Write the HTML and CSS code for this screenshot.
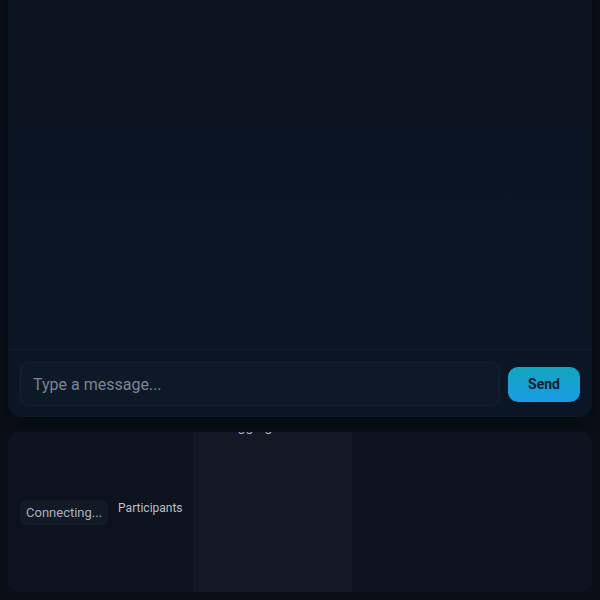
FILE: index.html
```html
<!DOCTYPE html>
<html lang="en">
<head>
<meta charset="utf-8">
<title>Chat</title>
<link rel="stylesheet" href="styles.css">
</head>
<body>
<main class="page">
  <section class="chat">
    <div class="messages"></div>
    <form class="composer">
      <input class="composer-input" type="text" placeholder="Type a message...">
      <button class="send-btn" type="button">Send</button>
    </form>
  </section>
  <section class="info">
    <div class="status-col">
      <span class="status-badge">Connecting...</span>
      <span class="participants-label">Participants</span>
    </div>
    <div class="list-col">
      <p class="list-text">Logging</p>
    </div>
    <div class="empty-col"></div>
  </section>
</main>
</body>
</html>
```
FILE: styles.css
```css
* { box-sizing: border-box; }
html, body {
  margin: 0;
  height: 100%;
}
body {
  background: #090e17;
  font-family: Roboto, "Liberation Sans", sans-serif;
  color: #b8c0cc;
}
.page {
  padding: 0 8px 8px;
  display: flex;
  flex-direction: column;
  gap: 15px;
}
.chat {
  height: 417px;
  display: flex;
  flex-direction: column;
  background: linear-gradient(180deg, #0c1320 0%, #0a1626 100%);
  border-radius: 0 0 14px 14px;
  box-shadow: 0 4px 14px rgba(0, 0, 0, 0.35);
}
.messages {
  flex: 1;
  border-bottom: 1px solid rgba(255, 255, 255, 0.035);
}
.composer {
  margin: 0;
  display: flex;
  align-items: center;
  gap: 8px;
  padding: 12px 12px 11px;
}
.composer-input {
  flex: 1;
  height: 44px;
  background: #0e1927;
  border: 1px solid rgba(255, 255, 255, 0.03);
  border-radius: 8px;
  padding: 0 12px;
  font-family: inherit;
  font-size: 16px;
  color: #c6ccd4;
  outline: none;
}
.composer-input::placeholder {
  color: #7a8592;
}
.send-btn {
  width: 72px;
  height: 35px;
  border: 0;
  border-radius: 10px;
  background: linear-gradient(180deg, #13a6bd 0%, #1a9be6 100%);
  color: #0b1a2c;
  font-family: inherit;
  font-weight: 700;
  font-size: 14px;
}
.info {
  height: 160px;
  display: grid;
  grid-template-columns: 185px 159px 1fr;
  background: #0c121e;
  border-radius: 10px;
  overflow: hidden;
}
.status-col {
  display: flex;
  align-items: center;
  gap: 10px;
  padding: 0 12px;
}
.status-badge {
  background: #121a26;
  border-radius: 6px;
  padding: 5px 6px;
  font-size: 13px;
  color: #a7afba;
}
.participants-label {
  font-size: 12px;
  color: #b8c0cc;
  margin-bottom: 8px;
}
.list-col {
  background: #121824;
  overflow: hidden;
}
.list-text {
  margin: -14px 0 0 29px;
  font-size: 14px;
  color: #aab2bd;
}
```
